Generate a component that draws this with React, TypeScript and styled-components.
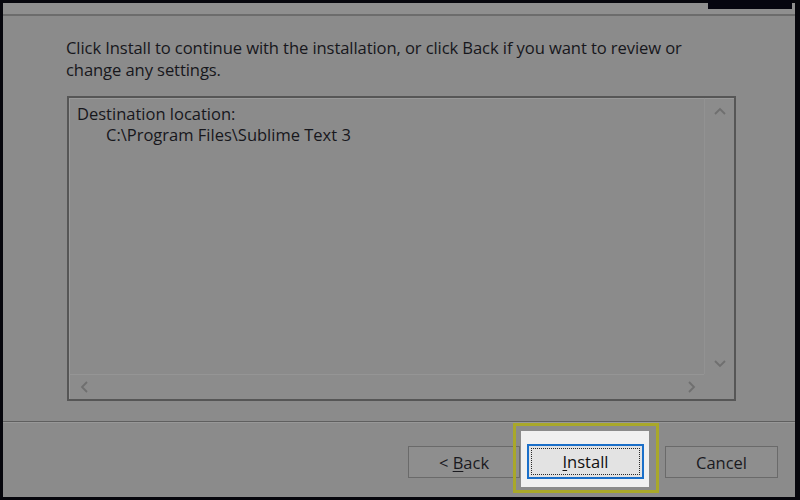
import styled, { createGlobalStyle } from "styled-components";

const GlobalStyle = createGlobalStyle`
  html, body {
    margin: 0;
    padding: 0;
    background: #07070d;
  }
  body {
    font-family: "Open Sans", "Noto Sans", sans-serif;
  }
`;

const Page = styled.div`
  width: 800px;
  height: 500px;
  box-sizing: border-box;
  padding: 3px 5px 3px 3px;
  overflow: hidden;
`;

const Dialog = styled.div`
  height: 100%;
  display: flex;
  flex-direction: column;
  background: #8b8b8b;
`;

const TopStrip = styled.div`
  height: 11px;
  display: flex;
  justify-content: flex-end;
  background: #8f8f8f;
  border-bottom: 2px solid #6c6c6c;
`;

const TitleBlock = styled.div`
  width: 84px;
  height: 9px;
  margin-top: -3px;
  margin-right: 3px;
  background: #05050f;
`;

const Body = styled.div`
  padding: 21px 59px 0 63px;
`;

const Intro = styled.p`
  margin: 0;
  font-size: 16.6px;
  line-height: 22px;
  color: #17171c;
  letter-spacing: -0.1px;
`;

const SummaryBox = styled.div`
  margin: 15px 0 0 1px;
  height: 305px;
  box-sizing: border-box;
  border: 2px solid #565656;
  display: grid;
  grid-template-columns: 1fr 30px;
  grid-template-rows: 1fr 25px;
`;

const Memo = styled.div`
  padding: 4px 7px;
  font-size: 16.5px;
  line-height: 21px;
  color: #17171c;
  border-top: 1px solid #999;
  border-left: 1px solid #999;
`;

const Indent = styled.div`
  padding-left: 29px;
`;

const VTrack = styled.div`
  display: flex;
  flex-direction: column;
  justify-content: space-between;
  align-items: center;
  padding: 8px 0 6px;
  border-left: 1px solid #929292;
  border-top: 1px solid #999;
  background: #8c8c8c;
`;

const HTrack = styled.div`
  display: flex;
  justify-content: space-between;
  align-items: center;
  padding: 0 8px 0 10px;
  border-top: 1px solid #959595;
  border-left: 1px solid #999;
  background: #8c8c8c;
`;

const Corner = styled.div`
  background: #8c8c8c;
`;

const Separator = styled.div`
  height: 1px;
  margin-top: 20px;
  background: #5f5f5f;
  border-bottom: 1px solid #989898;
`;

const Footer = styled.div`
  flex: 1;
  display: flex;
  align-items: flex-start;
  padding-left: 405px;
`;

const Button = styled.div<{ $width: number }>`
  width: ${(p) => p.$width}px;
  height: 32px;
  margin-top: 23px;
  box-sizing: border-box;
  border: 1px solid #6a6a6a;
  background: #8e8e8e;
  display: flex;
  align-items: center;
  justify-content: center;
  font-size: 16.5px;
  color: #1a1a1f;
`;

const Spotlight = styled.div`
  position: relative;
  z-index: 1;
  width: 146px;
  height: 70px;
  margin-left: -7px;
  margin-right: 6px;
  box-sizing: border-box;
  border: 3px solid #a9a82a;
  padding: 5px 7px 3px 5px;
`;

const Lit = styled.div`
  height: 100%;
  box-sizing: border-box;
  background: #f0f0f0;
  padding: 13px 5px 0 6px;
`;

const DefaultButton = styled.div`
  height: 35px;
  box-sizing: border-box;
  border: 2px solid #1a6fc9;
  background: #e3e3e3;
  padding: 2px;
`;

const FocusRing = styled.div`
  height: 100%;
  box-sizing: border-box;
  border: 1px dotted #2a2a2a;
  display: flex;
  align-items: center;
  justify-content: center;
  font-size: 16.5px;
  color: #111;
`;

const Key = styled.span`
  text-decoration: underline;
  text-underline-offset: 2px;
`;

function Chevron({ dir }: { dir: "up" | "down" | "left" | "right" }) {
  const pts = {
    up: "1,7 6,2 11,7",
    down: "1,2 6,7 11,2",
    left: "7,1 2,6 7,11",
    right: "2,1 7,6 2,11",
  }[dir];
  const vertical = dir === "up" || dir === "down";
  return (
    <svg width={vertical ? 12 : 9} height={vertical ? 9 : 12} viewBox={vertical ? "0 0 12 9" : "0 0 9 12"}>
      <polyline points={pts} fill="none" stroke="#6f6f6f" strokeWidth="1.8" />
    </svg>
  );
}

export default function App() {
  return (
    <>
      <GlobalStyle />
      <Page>
        <Dialog>
          <TopStrip>
            <TitleBlock />
          </TopStrip>
          <Body>
            <Intro>
              Click Install to continue with the installation, or click Back if you want to review or
              <br />
              change any settings.
            </Intro>
            <SummaryBox>
              <Memo>
                Destination location:
                <Indent>C:\Program Files\Sublime Text 3</Indent>
              </Memo>
              <VTrack>
                <Chevron dir="up" />
                <Chevron dir="down" />
              </VTrack>
              <HTrack>
                <Chevron dir="left" />
                <Chevron dir="right" />
              </HTrack>
              <Corner />
            </SummaryBox>
          </Body>
          <Separator />
          <Footer>
            <Button $width={112}>
              &lt;&nbsp;<Key>B</Key>ack
            </Button>
            <Spotlight>
              <Lit>
                <DefaultButton>
                  <FocusRing>
                    <Key>I</Key>nstall
                  </FocusRing>
                </DefaultButton>
              </Lit>
            </Spotlight>
            <Button $width={113}>Cancel</Button>
          </Footer>
        </Dialog>
      </Page>
    </>
  );
}
